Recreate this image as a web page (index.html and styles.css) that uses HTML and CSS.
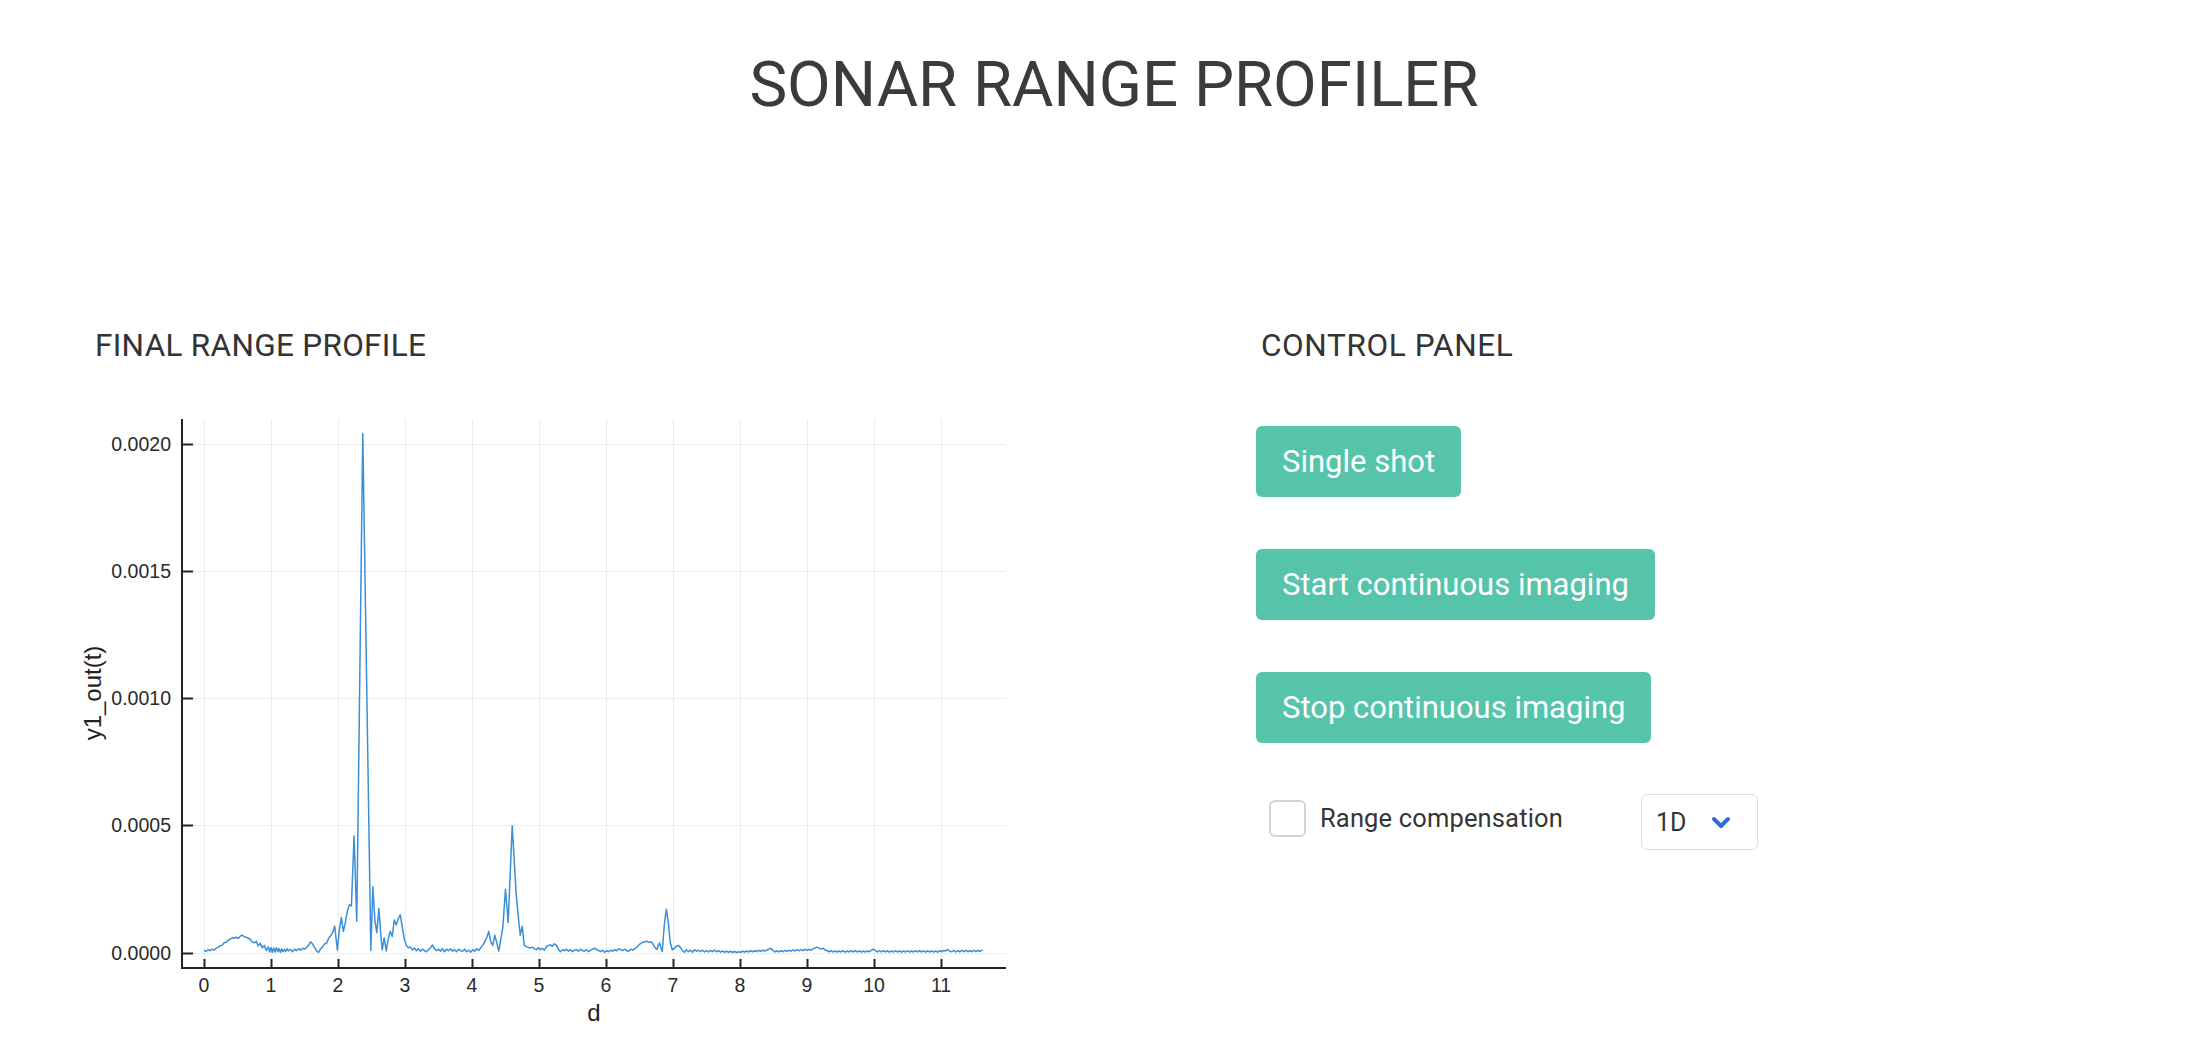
FILE: index.html
```html
<!DOCTYPE html>
<html lang="en">
<head>
<meta charset="utf-8">
<title>Sonar Range Profiler</title>
<link rel="stylesheet" href="styles.css">
</head>
<body>
<h1 class="title">SONAR RANGE PROFILER</h1>
<main class="layout">
  <section class="panel panel-plot">
    <h2 class="panel-title">FINAL RANGE PROFILE</h2>
    <svg class="chart" viewBox="0 0 960 630" width="960" height="630">
      <g class="grid">
        <line x1="124.5" y1="19" x2="124.5" y2="568"/>
        <line x1="191.5" y1="19" x2="191.5" y2="568"/>
        <line x1="258.5" y1="19" x2="258.5" y2="568"/>
        <line x1="325.5" y1="19" x2="325.5" y2="568"/>
        <line x1="392.5" y1="19" x2="392.5" y2="568"/>
        <line x1="459.5" y1="19" x2="459.5" y2="568"/>
        <line x1="526.5" y1="19" x2="526.5" y2="568"/>
        <line x1="593.5" y1="19" x2="593.5" y2="568"/>
        <line x1="660.5" y1="19" x2="660.5" y2="568"/>
        <line x1="727.5" y1="19" x2="727.5" y2="568"/>
        <line x1="794.5" y1="19" x2="794.5" y2="568"/>
        <line x1="861.5" y1="19" x2="861.5" y2="568"/>
        <line x1="102" y1="553.5" x2="926" y2="553.5"/>
        <line x1="102" y1="425.5" x2="926" y2="425.5"/>
        <line x1="102" y1="298.5" x2="926" y2="298.5"/>
        <line x1="102" y1="171.5" x2="926" y2="171.5"/>
        <line x1="102" y1="44.5" x2="926" y2="44.5"/>
      </g>
      <g class="data" transform="translate(124 553) scale(67 -25.45)">
        <polyline class="series" points="0.00,0.10 0.03,0.06 0.06,0.13 0.09,0.09 0.12,0.15 0.15,0.11 0.18,0.19 0.21,0.22 0.24,0.28 0.27,0.30 0.30,0.40 0.33,0.42 0.36,0.50 0.39,0.54 0.42,0.60 0.45,0.58 0.48,0.62 0.51,0.57 0.54,0.66 0.57,0.70 0.60,0.64 0.63,0.62 0.66,0.58 0.69,0.54 0.72,0.44 0.75,0.40 0.78,0.46 0.81,0.28 0.84,0.38 0.87,0.20 0.90,0.30 0.93,0.10 0.96,0.24 0.98,0.04 1.00,0.22 1.02,0.03 1.04,0.20 1.06,0.04 1.08,0.21 1.10,0.05 1.12,0.18 1.14,0.03 1.16,0.16 1.18,0.05 1.20,0.14 1.22,0.06 1.24,0.17 1.26,0.08 1.29,0.14 1.32,0.05 1.35,0.15 1.38,0.09 1.41,0.17 1.44,0.11 1.47,0.19 1.50,0.15 1.53,0.21 1.56,0.30 1.59,0.44 1.62,0.36 1.65,0.22 1.68,0.08 1.71,0.02 1.74,0.16 1.77,0.24 1.80,0.36 1.83,0.38 1.86,0.58 1.89,0.68 1.92,0.80 1.95,1.06 1.97,0.60 1.99,0.12 2.02,0.90 2.05,1.40 2.08,0.85 2.11,1.20 2.14,1.65 2.17,1.90 2.20,1.85 2.24,4.60 2.28,1.25 2.37,20.40 2.49,0.10 2.52,2.60 2.55,1.30 2.58,0.80 2.61,1.75 2.64,0.70 2.66,0.12 2.69,0.60 2.72,0.08 2.75,0.55 2.78,0.85 2.81,0.65 2.84,1.30 2.87,1.10 2.90,1.35 2.93,1.50 2.96,1.00 2.99,0.55 3.02,0.30 3.05,0.20 3.08,0.24 3.11,0.12 3.14,0.20 3.17,0.09 3.20,0.17 3.23,0.07 3.26,0.15 3.29,0.09 3.32,0.05 3.35,0.13 3.38,0.20 3.41,0.32 3.44,0.16 3.47,0.09 3.50,0.15 3.53,0.07 3.56,0.17 3.59,0.05 3.62,0.15 3.65,0.09 3.68,0.17 3.71,0.07 3.74,0.13 3.77,0.05 3.80,0.15 3.83,0.09 3.86,0.07 3.89,0.15 3.92,0.05 3.95,0.11 3.98,0.03 4.01,0.13 4.04,0.07 4.07,0.17 4.10,0.10 4.13,0.20 4.16,0.30 4.19,0.45 4.22,0.60 4.25,0.85 4.28,0.45 4.31,0.30 4.34,0.70 4.37,0.40 4.40,0.08 4.43,0.55 4.46,1.00 4.50,2.50 4.54,1.20 4.60,5.00 4.66,2.30 4.70,1.20 4.72,0.70 4.75,1.05 4.78,0.30 4.81,0.25 4.84,0.22 4.87,0.20 4.90,0.23 4.93,0.17 4.96,0.13 4.99,0.21 5.02,0.13 5.05,0.19 5.08,0.11 5.11,0.24 5.14,0.30 5.17,0.32 5.20,0.26 5.23,0.36 5.26,0.30 5.29,0.14 5.32,0.05 5.35,0.13 5.38,0.09 5.41,0.15 5.44,0.07 5.47,0.13 5.50,0.05 5.53,0.11 5.56,0.13 5.59,0.07 5.62,0.15 5.65,0.09 5.68,0.07 5.71,0.13 5.74,0.05 5.77,0.11 5.80,0.15 5.83,0.19 5.86,0.13 5.89,0.10 5.92,0.05 5.95,0.11 5.98,0.03 6.01,0.09 6.04,0.05 6.07,0.11 6.10,0.07 6.13,0.13 6.16,0.09 6.19,0.17 6.22,0.13 6.25,0.10 6.28,0.15 6.31,0.09 6.34,0.07 6.37,0.15 6.40,0.11 6.43,0.17 6.46,0.22 6.49,0.32 6.52,0.38 6.55,0.42 6.58,0.44 6.61,0.46 6.64,0.42 6.67,0.44 6.70,0.36 6.73,0.22 6.76,0.14 6.78,0.30 6.80,0.40 6.82,0.20 6.84,0.06 6.87,1.10 6.90,1.72 6.93,1.20 6.96,0.40 6.99,0.12 7.02,0.18 7.05,0.28 7.08,0.30 7.11,0.22 7.14,0.10 7.17,0.03 7.20,0.13 7.23,0.05 7.26,0.11 7.29,0.03 7.32,0.13 7.35,0.07 7.38,0.11 7.41,0.05 7.44,0.11 7.47,0.04 7.50,0.09 7.53,0.04 7.56,0.10 7.59,0.05 7.62,0.11 7.65,0.05 7.68,0.09 7.71,0.03 7.74,0.08 7.77,0.03 7.80,0.07 7.83,0.03 7.86,0.07 7.89,0.02 7.92,0.06 7.95,0.02 7.98,0.05 8.01,0.03 8.04,0.07 8.07,0.04 8.10,0.08 8.13,0.04 8.16,0.09 8.19,0.05 8.22,0.09 8.25,0.06 8.28,0.10 8.31,0.06 8.34,0.11 8.37,0.08 8.40,0.12 8.43,0.15 8.46,0.19 8.49,0.10 8.52,0.04 8.55,0.09 8.58,0.04 8.61,0.09 8.64,0.05 8.67,0.10 8.70,0.06 8.73,0.11 8.76,0.07 8.79,0.12 8.82,0.08 8.85,0.13 8.88,0.09 8.91,0.13 8.94,0.09 8.97,0.15 9.00,0.10 9.03,0.14 9.06,0.11 9.09,0.16 9.12,0.20 9.15,0.23 9.18,0.19 9.21,0.16 9.24,0.19 9.27,0.12 9.30,0.09 9.33,0.05 9.36,0.09 9.39,0.04 9.42,0.08 9.45,0.04 9.48,0.08 9.51,0.04 9.54,0.09 9.57,0.03 9.60,0.08 9.63,0.04 9.66,0.09 9.69,0.04 9.72,0.09 9.75,0.04 9.78,0.08 9.81,0.03 9.84,0.08 9.87,0.04 9.90,0.08 9.93,0.05 9.96,0.10 9.99,0.15 10.02,0.10 10.05,0.04 10.08,0.09 10.11,0.04 10.14,0.09 10.17,0.04 10.20,0.09 10.23,0.03 10.26,0.08 10.29,0.04 10.32,0.09 10.35,0.04 10.38,0.08 10.41,0.03 10.44,0.08 10.47,0.04 10.50,0.09 10.53,0.04 10.56,0.08 10.59,0.04 10.62,0.09 10.65,0.04 10.68,0.09 10.71,0.05 10.74,0.08 10.77,0.03 10.80,0.09 10.83,0.04 10.86,0.08 10.89,0.04 10.92,0.08 10.95,0.03 10.98,0.09 11.01,0.05 11.04,0.10 11.07,0.08 11.10,0.14 11.13,0.07 11.16,0.05 11.19,0.10 11.22,0.04 11.25,0.09 11.28,0.05 11.31,0.10 11.34,0.05 11.37,0.10 11.40,0.05 11.43,0.09 11.46,0.05 11.49,0.10 11.52,0.06 11.55,0.10 11.58,0.07 11.62,0.12"/>
      </g>
      <g class="axes">
        <line x1="102" y1="19" x2="102" y2="569"/>
        <line x1="101" y1="568" x2="926" y2="568"/>
        <line x1="102" y1="553.5" x2="113" y2="553.5"/>
        <line x1="102" y1="425.5" x2="113" y2="425.5"/>
        <line x1="102" y1="298.5" x2="113" y2="298.5"/>
        <line x1="102" y1="171.5" x2="113" y2="171.5"/>
        <line x1="102" y1="44.5" x2="113" y2="44.5"/>
        <line x1="124.5" y1="568" x2="124.5" y2="559"/>
        <line x1="191.5" y1="568" x2="191.5" y2="559"/>
        <line x1="258.5" y1="568" x2="258.5" y2="559"/>
        <line x1="325.5" y1="568" x2="325.5" y2="559"/>
        <line x1="392.5" y1="568" x2="392.5" y2="559"/>
        <line x1="459.5" y1="568" x2="459.5" y2="559"/>
        <line x1="526.5" y1="568" x2="526.5" y2="559"/>
        <line x1="593.5" y1="568" x2="593.5" y2="559"/>
        <line x1="660.5" y1="568" x2="660.5" y2="559"/>
        <line x1="727.5" y1="568" x2="727.5" y2="559"/>
        <line x1="794.5" y1="568" x2="794.5" y2="559"/>
        <line x1="861.5" y1="568" x2="861.5" y2="559"/>
      </g>
      <g class="tick-labels y-labels">
        <text x="91" y="560">0.0000</text>
        <text x="91" y="432">0.0005</text>
        <text x="91" y="305">0.0010</text>
        <text x="91" y="178">0.0015</text>
        <text x="91" y="51">0.0020</text>
      </g>
      <g class="tick-labels x-labels">
        <text x="124" y="592">0</text>
        <text x="191" y="592">1</text>
        <text x="258" y="592">2</text>
        <text x="325" y="592">3</text>
        <text x="392" y="592">4</text>
        <text x="459" y="592">5</text>
        <text x="526" y="592">6</text>
        <text x="593" y="592">7</text>
        <text x="660" y="592">8</text>
        <text x="727" y="592">9</text>
        <text x="794" y="592">10</text>
        <text x="861" y="592">11</text>
      </g>
      <text class="axis-label" x="514" y="621">d</text>
      <text class="axis-label" transform="translate(21 293) rotate(-90)">y1_out(t)</text>
    </svg>
  </section>
  <section class="panel panel-controls">
    <h2 class="panel-title">CONTROL PANEL</h2>
    <div class="buttons">
      <button class="btn" type="button">Single shot</button>
      <button class="btn" type="button">Start continuous imaging</button>
      <button class="btn" type="button">Stop continuous imaging</button>
    </div>
    <div class="options">
      <label class="check"><span class="box"></span><span class="check-text">Range compensation</span></label>
      <div class="select">
        <span class="select-value">1D</span>
        <svg class="chevron" viewBox="0 0 20 13" width="20" height="13"><polyline points="3,3 10,10 17,3"/></svg>
      </div>
    </div>
  </section>
</main>
</body>
</html>
```

FILE: styles.css
```css
html, body {
  margin: 0;
  padding: 0;
  background: #ffffff;
}

body {
  font-family: Roboto, "Liberation Sans", Arial, sans-serif;
  color: #333333;
}

.title {
  margin: 0;
  padding: 48px 0 0 38px;
  font-size: 63.5px;
  line-height: 74px;
  font-weight: 400;
  color: #3b3b3b;
  text-align: center;
}

.layout {
  display: flex;
  margin-top: 205px;
  padding-left: 80px;
}

.panel-plot {
  width: 1176px;
  flex: none;
}

.panel-controls {
  display: flex;
  flex-direction: column;
  align-items: flex-start;
}

.panel-title {
  margin: 0;
  font-size: 31.5px;
  line-height: 37px;
  font-weight: 400;
  letter-spacing: 0.3px;
  color: #333333;
}

.panel-plot .panel-title {
  padding-left: 15px;
}

.panel-controls .panel-title {
  padding-left: 5px;
  letter-spacing: 0.6px;
}

.chart {
  display: block;
  margin-top: 36px;
}

.grid line {
  stroke: #ececec;
  stroke-width: 1;
}

.axes line {
  stroke: #222222;
  stroke-width: 2;
}

.series {
  fill: none;
  stroke: #3b8fd8;
  stroke-width: 1.5;
  stroke-linejoin: round;
  vector-effect: non-scaling-stroke;
}

.tick-labels text {
  font-family: "Liberation Sans", Arial, sans-serif;
  font-size: 19.5px;
  fill: #2a2a2a;
}

.y-labels text {
  text-anchor: end;
}

.x-labels text {
  text-anchor: middle;
}

.axis-label {
  font-family: "Liberation Sans", Arial, sans-serif;
  font-size: 24px;
  fill: #222222;
  text-anchor: middle;
}

.buttons {
  display: flex;
  flex-direction: column;
  align-items: flex-start;
  gap: 52px;
  margin-top: 62px;
}

.btn {
  height: 71px;
  padding: 0 26px;
  border: none;
  border-radius: 6px;
  background: #56c4aa;
  color: #ffffff;
  font-family: Roboto, "Liberation Sans", Arial, sans-serif;
  font-size: 31px;
  font-weight: 400;
  cursor: pointer;
}

.options {
  display: flex;
  align-items: center;
  margin-top: 51px;
  padding-left: 13px;
  height: 56px;
}

.check {
  display: flex;
  align-items: center;
  gap: 14px;
  width: 372px;
  margin-bottom: 8px;
  font-size: 25.5px;
  letter-spacing: 0.15px;
  color: #353535;
}

.box {
  width: 37px;
  height: 37px;
  box-sizing: border-box;
  border: 2px solid #d4d4d4;
  border-radius: 6px;
  background: #ffffff;
  flex: none;
}

.select {
  display: flex;
  align-items: center;
  gap: 25px;
  width: 117px;
  height: 56px;
  box-sizing: border-box;
  padding-left: 14px;
  border: 1.5px solid #dddddd;
  border-radius: 6px;
  font-size: 25px;
  color: #333333;
}

.chevron polyline {
  fill: none;
  stroke: #2d6cd2;
  stroke-width: 4;
  stroke-linecap: round;
  stroke-linejoin: round;
}
```
